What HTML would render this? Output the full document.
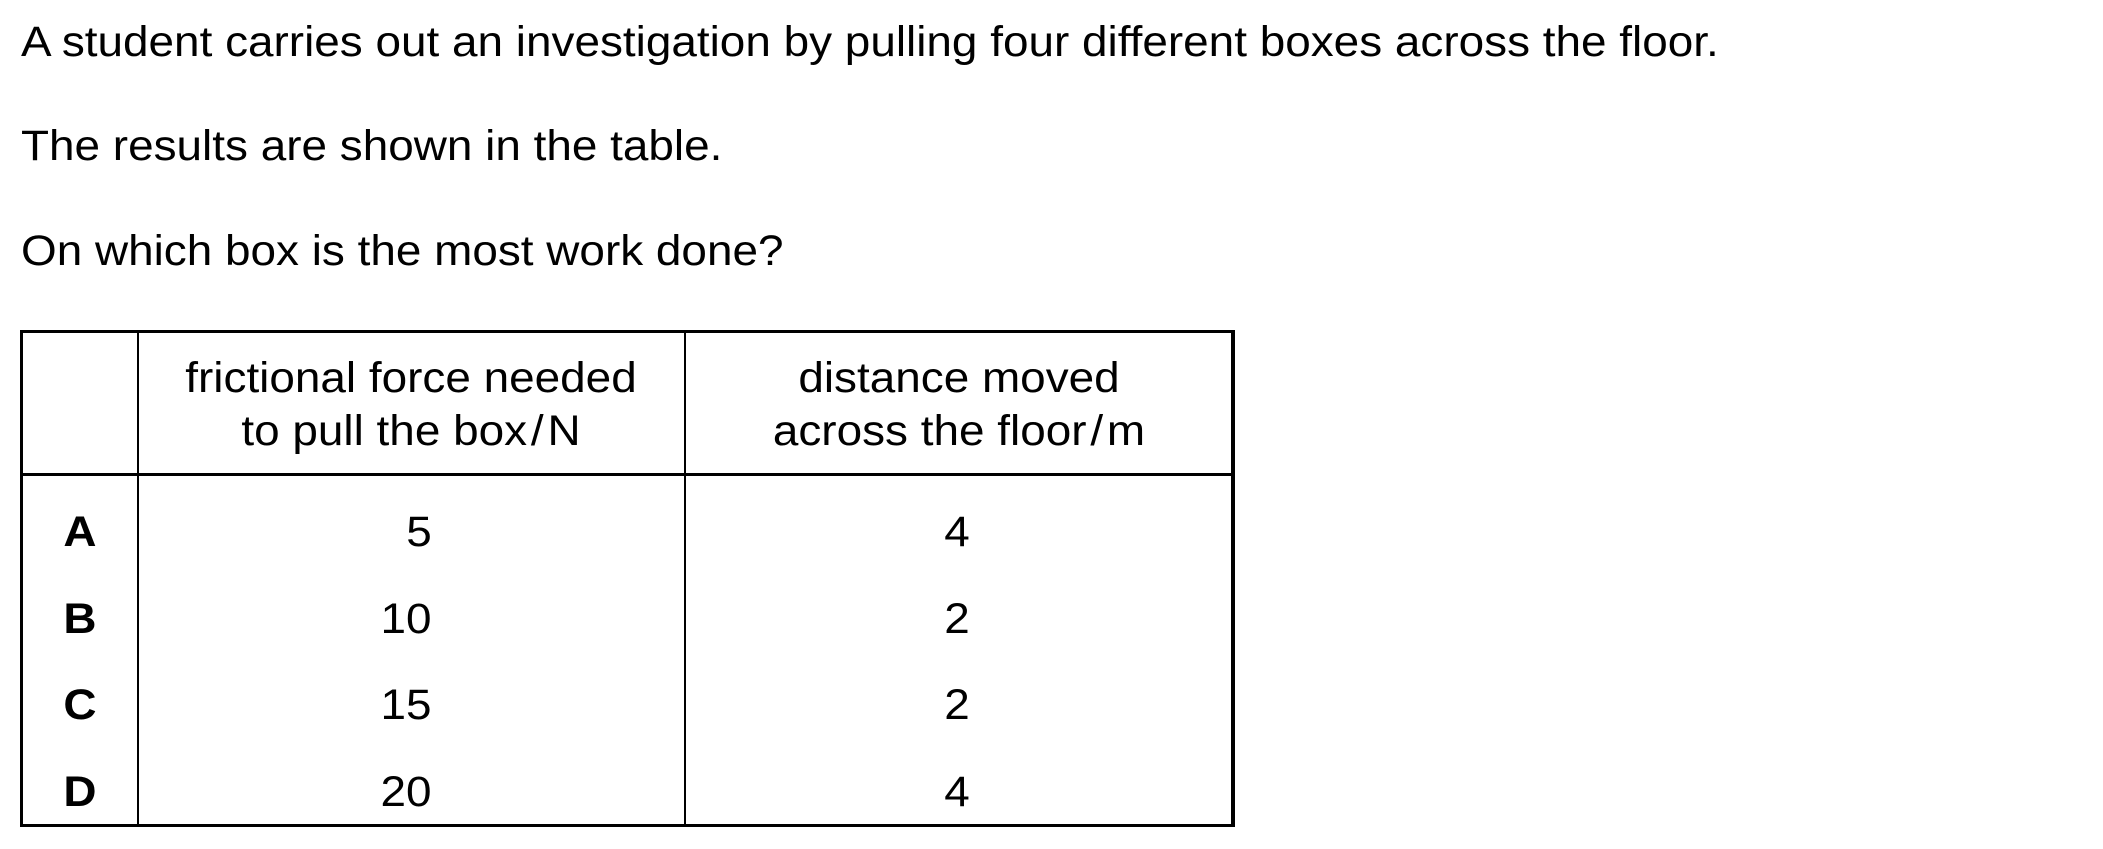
<!DOCTYPE html>
<html><head><meta charset="utf-8"><style>
body{margin:0;width:2103px;height:849px;background:#fff;font-family:"Liberation Sans",Arial,sans-serif;color:#000;position:relative;overflow:hidden}
.t{position:absolute;left:21px;font-size:43px;line-height:1;white-space:nowrap;transform:scaleX(1.067);transform-origin:0 0}
.l{position:absolute;background:#000}
.c{position:absolute;font-size:43px;line-height:1;white-space:nowrap;text-align:center;transform:translateX(-50%) scaleX(1.067)}
.b{font-weight:bold}
</style></head><body>
<div class="t" style="top:21px">A student carries out an investigation by pulling four different boxes across the floor.</div>
<div class="t" style="top:125px">The results are shown in the table.</div>
<div class="t" style="top:230px">On which box is the most work done?</div>

<div class="l" style="left:20px;top:330px;width:1215px;height:3px"></div>
<div class="l" style="left:20px;top:473px;width:1215px;height:3px"></div>
<div class="l" style="left:20px;top:824px;width:1215px;height:3px"></div>
<div class="l" style="left:20px;top:330px;width:3px;height:497px"></div>
<div class="l" style="left:137px;top:330px;width:2px;height:497px"></div>
<div class="l" style="left:684px;top:330px;width:2px;height:497px"></div>
<div class="l" style="left:1231px;top:330px;width:4px;height:497px"></div>

<div class="c" style="left:411px;top:357px">frictional force needed</div>
<div class="c" style="left:411px;top:410px">to pull the box&#8202;/&#8202;N</div>
<div class="c" style="left:959px;top:357px">distance moved</div>
<div class="c" style="left:959px;top:410px">across the floor&#8202;/&#8202;m</div>

<div class="c b" style="left:80px;top:511px">A</div>
<div class="c b" style="left:80px;top:598px">B</div>
<div class="c b" style="left:80px;top:684px">C</div>
<div class="c b" style="left:80px;top:771px">D</div>

<div class="c" style="left:419px;top:511px">5</div>
<div class="c" style="left:406px;top:598px">10</div>
<div class="c" style="left:406px;top:684px">15</div>
<div class="c" style="left:406px;top:771px">20</div>

<div class="c" style="left:957px;top:511px">4</div>
<div class="c" style="left:957px;top:598px">2</div>
<div class="c" style="left:957px;top:684px">2</div>
<div class="c" style="left:957px;top:771px">4</div>
</body></html>
